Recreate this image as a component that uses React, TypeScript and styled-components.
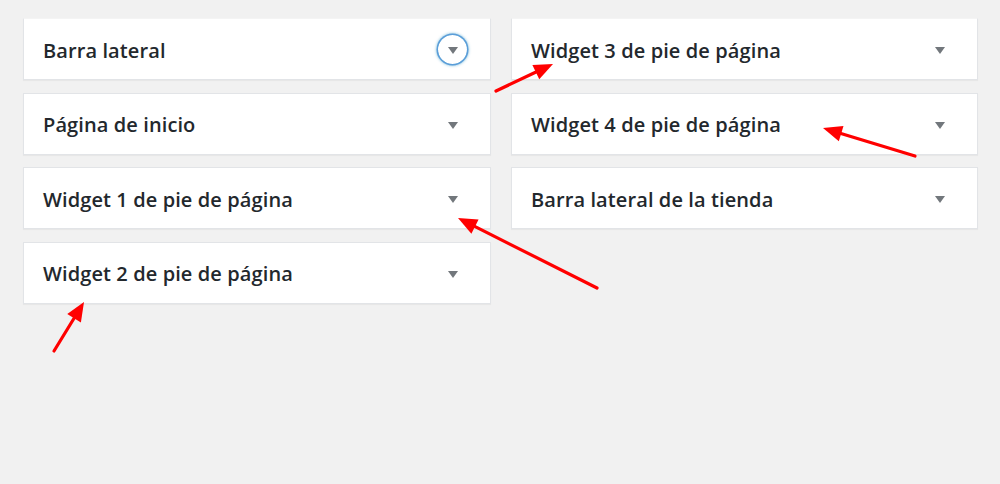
import React from "react";
import styled, { createGlobalStyle } from "styled-components";

const GlobalStyle = createGlobalStyle`
  html, body {
    margin: 0;
    padding: 0;
    background: #f1f1f1;
  }
  body {
    font-family: "Open Sans", "Noto Sans", sans-serif;
  }
`;

const Page = styled.div`
  position: relative;
  width: 1000px;
  height: 484px;
  box-sizing: border-box;
  padding: 18px 22px 0 23px;
  background: #f1f1f1;
`;

const Columns = styled.div`
  display: grid;
  grid-template-columns: 468px 467px;
  column-gap: 20px;
  align-items: start;
`;

const Column = styled.div`
  display: flex;
  flex-direction: column;
  gap: 12.67px;
`;

const Card = styled.div<{ $first?: boolean }>`
  box-sizing: border-box;
  height: 62px;
  display: flex;
  align-items: center;
  justify-content: space-between;
  padding: 0 24px 0 19px;
  background: #fff;
  border: 1px solid #e2e4e7;
  border-top-color: ${(p) => (p.$first ? "#f4f4f4" : "#e2e4e7")};
  box-shadow: 0 1px 1px rgba(0, 0, 0, 0.04);
`;

const Title = styled.h2`
  margin: 3px 0 0;
  font-size: 20px;
  font-weight: 600;
  color: #23282d;
  line-height: 1;
  letter-spacing: 0.1px;
`;

const Toggle = styled.button<{ $focused?: boolean }>`
  width: 29px;
  height: 29px;
  padding: 0;
  margin: 1px -1px 0 0;
  display: flex;
  align-items: center;
  justify-content: center;
  border: none;
  border-radius: 50%;
  background: transparent;
  box-shadow: ${(p) =>
    p.$focused
      ? "0 0 0 1.5px #5b9dd9, 0 0 3px 1.5px rgba(30, 140, 190, 0.6)"
      : "none"};
`;

const Arrow = styled.span`
  width: 0;
  height: 0;
  border-left: 5.5px solid transparent;
  border-right: 5.5px solid transparent;
  border-top: 7px solid #72777c;
  margin-top: 2px;
`;

const Overlay = styled.svg`
  position: absolute;
  left: 0;
  top: 0;
  width: 1000px;
  height: 484px;
  pointer-events: none;
`;

type Item = { title: string; focused?: boolean };

const left: Item[] = [
  { title: "Barra lateral", focused: true },
  { title: "Página de inicio" },
  { title: "Widget 1 de pie de página" },
  { title: "Widget 2 de pie de página" },
];

const right: Item[] = [
  { title: "Widget 3 de pie de página" },
  { title: "Widget 4 de pie de página" },
  { title: "Barra lateral de la tienda" },
];

function Box({ item, first }: { item: Item; first?: boolean }) {
  return (
    <Card $first={first}>
      <Title>{item.title}</Title>
      <Toggle $focused={item.focused} aria-label="Alternar panel">
        <Arrow />
      </Toggle>
    </Card>
  );
}

function RedArrow({ x1, y1, x2, y2 }: { x1: number; y1: number; x2: number; y2: number }) {
  const dx = x2 - x1;
  const dy = y2 - y1;
  const len = Math.hypot(dx, dy);
  const ux = dx / len;
  const uy = dy / len;
  const headLen = 19;
  const headW = 8;
  const bx = x2 - ux * headLen;
  const by = y2 - uy * headLen;
  const px = -uy;
  const py = ux;
  const pts = `${x2},${y2} ${bx + px * headW},${by + py * headW} ${bx - px * headW},${by - py * headW}`;
  return (
    <g>
      <line x1={x1} y1={y1} x2={bx + ux * 2} y2={by + uy * 2} stroke="#ff0000" strokeWidth={3.2} strokeLinecap="round" />
      <polygon points={pts} fill="#ff0000" />
    </g>
  );
}

export default function App() {
  return (
    <Page>
      <GlobalStyle />
      <Columns>
        <Column>
          {left.map((it, i) => (
            <Box key={it.title} item={it} first={i === 0} />
          ))}
        </Column>
        <Column>
          {right.map((it, i) => (
            <Box key={it.title} item={it} first={i === 0} />
          ))}
        </Column>
      </Columns>
      <Overlay viewBox="0 0 1000 484">
        <RedArrow x1={496} y1={91} x2={553} y2={64} />
        <RedArrow x1={915} y1={156} x2={823} y2={128} />
        <RedArrow x1={597} y1={288} x2={458} y2={218} />
        <RedArrow x1={54} y1={351} x2={84} y2={302} />
      </Overlay>
    </Page>
  );
}
